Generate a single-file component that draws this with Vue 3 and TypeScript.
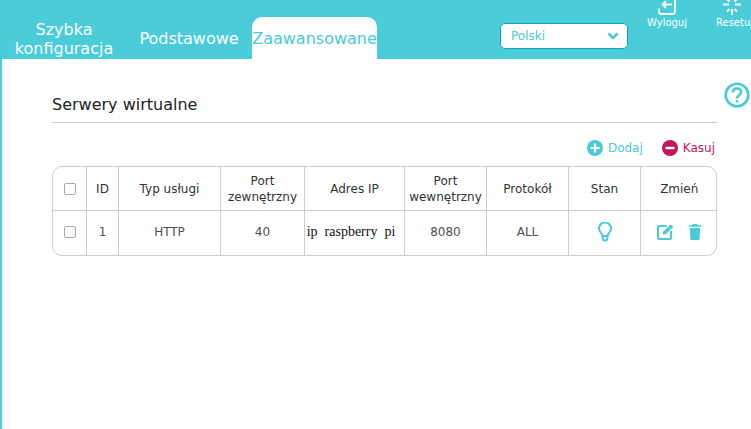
<script setup lang="ts">
interface Col { label: string[]; width: number }
const cols: Col[] = [
  { label: ['ID'], width: 32 },
  { label: ['Typ usługi'], width: 102 },
  { label: ['Port', 'zewnętrzny'], width: 84 },
  { label: ['Adres IP'], width: 100 },
  { label: ['Port', 'wewnętrzny'], width: 82 },
  { label: ['Protokół'], width: 82 },
  { label: ['Stan'], width: 72 },
  { label: ['Zmień'], width: 77 },
]
</script>

<template>
  <div class="page">
    <header class="top">
      <nav class="tabs">
        <a class="tab quick">Szybka<br />konfiguracja</a>
        <a class="tab basic">Podstawowe</a>
        <a class="tab active">Zaawansowane</a>
      </nav>
      <div class="lang">
        <span>Polski</span>
        <svg width="12" height="8" viewBox="0 0 12 8"><path d="M1.500 1.500 6 6l4.500-4.500" fill="none" stroke="#4acbd6" stroke-width="2.600" /></svg>
      </div>
      <div class="act logout">
        <svg width="18" height="15" viewBox="0 0 18 15" fill="none" stroke="#fff" stroke-width="1.800">
          <path d="M1 8.500v3q0 2.500 2.500 2.500h11q2.500 0 2.500-2.500V0" />
          <path d="M14 4.500H5M8 1 4.500 4.500 8 8" />
        </svg>
        <span>Wyloguj</span>
      </div>
      <div class="act reset">
        <svg width="26" height="15" viewBox="0 0 26 15" fill="none" stroke="#fff" stroke-width="2">
          <path d="M10 9v6M1 4.500h6M13 4.500h6M5 11.500 7.500 9M12.500 9 15 11.500M5 -1l2.500 2.500M15 -1l-2.500 2.500" />
        </svg>
        <span>Resetuj</span>
      </div>
    </header>

    <main class="content">
      <h1 class="title">Serwery wirtualne</h1>
      <div class="help">
        <svg width="26" height="26" viewBox="0 0 26 26" fill="none" stroke="#4acbd6" stroke-width="2.600">
          <circle cx="13" cy="13" r="11.300" />
          <path d="M9 10.500q0-4 4-4t4 3.600q0 2-2 3.200t-2 3.200" />
          <path d="M13 18v2.500" />
        </svg>
      </div>
      <div class="tools">
        <span class="tool add">
          <svg width="16" height="16" viewBox="0 0 16 16"><circle cx="8" cy="8" r="8" fill="#4acbd6" /><path d="M8 3.500v9M3.500 8h9" stroke="#fff" stroke-width="2.200" /></svg>
          Dodaj
        </span>
        <span class="tool del">
          <svg width="16" height="16" viewBox="0 0 16 16"><circle cx="8" cy="8" r="8" fill="#c2185b" /><path d="M3.500 8h9" stroke="#fff" stroke-width="2.400" /></svg>
          Kasuj
        </span>
      </div>
      <div class="grid-wrap">
        <table class="grid">
          <colgroup>
            <col style="width: 33px" />
            <col v-for="c in cols" :key="c.label.join()" :style="{ width: c.width + 'px' }" />
          </colgroup>
          <thead>
            <tr>
              <th><span class="check"></span></th>
              <th v-for="c in cols" :key="c.label.join()">
                <template v-for="(l, i) in c.label" :key="l"><br v-if="i" />{{ l }}</template>
              </th>
            </tr>
          </thead>
          <tbody>
            <tr>
              <td><span class="check"></span></td>
              <td>1</td>
              <td>HTTP</td>
              <td>40</td>
              <td class="ip">ip&nbsp; raspberry&nbsp; pi</td>
              <td>8080</td>
              <td>ALL</td>
              <td>
                <svg class="bulb" width="14" height="20" viewBox="0 0 14 20" fill="none" stroke="#4acbd6" stroke-width="2">
                  <path d="M4.500 14c0-2.500-3.500-3.500-3.500-7.500a6 6 0 0 1 12 0c0 4-3.500 5-3.500 7.500z" />
                  <path d="M4.700 14v2.500q0 2 2 2h.6q2 0 2-2V14" />
                </svg>
              </td>
              <td>
                <span class="edits">
                  <svg width="17" height="16" viewBox="0 0 17 16" fill="none">
                    <path d="M9.500 2H2.500Q1 2 1 3.500v10Q1 15 2.500 15h10q1.500 0 1.500-1.500V7" stroke="#4acbd6" stroke-width="2" />
                    <path d="M6 7.700 13.500 0.500 16.500 2.500 8.500 10.500H6z" fill="#4acbd6" />
                  </svg>
                  <svg width="12" height="16" viewBox="0 0 12 16">
                    <path d="M4 0h4L9 1.200h3v1.500H0V1.200h3zM.8 4h10.400l-.5 10.500q-.1 1.500-1.600 1.500H2.900q-1.500 0-1.600-1.500z" fill="#4acbd6" />
                  </svg>
                </span>
              </td>
            </tr>
          </tbody>
        </table>
      </div>
    </main>
  </div>
</template>

<style scoped>
.page {
  width: 751px;
  height: 429px;
  overflow: hidden;
  background: #fff;
  font-family: "DejaVu Sans", sans-serif;
  position: relative;
}
.top {
  height: 59px;
  background: #4acdd9;
  display: flex;
  align-items: flex-start;
  overflow: hidden;
}
.tabs {
  display: flex;
  flex: none;
  align-items: stretch;
  margin-top: 17px;
  color: #fff;
  font-size: 16px;
  height: 42px;
}
.tab {
  display: block;
  text-align: center;
  white-space: nowrap;
}
.quick {
  width: 128px;
  line-height: 19px;
  padding-top: 3px;
  box-sizing: border-box;
}
.basic {
  width: 124px;
  padding-top: 13px;
  padding-right: 2px;
  box-sizing: border-box;
  line-height: 18px;
}
.active {
  width: 125px;
  background: #fff;
  color: #4acbd6;
  border-radius: 10px 10px 0 0;
  padding-top: 13px;
  line-height: 18px;
}
.lang {
  flex: none;
  width: 128px;
  height: 26px;
  box-sizing: border-box;
  margin: 23px 0 0 123px;
  background: #fff;
  border: 1px solid #0ea5b0;
  border-radius: 5px;
  display: flex;
  align-items: center;
  justify-content: space-between;
  padding: 0 8px 0 10px;
  font-size: 12px;
  color: #4acbd6;
}
.act {
  display: flex;
  flex-direction: column;
  align-items: center;
  color: #fff;
  font-size: 10px;
  line-height: 12px;
  flex: none;
}
.act svg { display: block; margin-bottom: 2px; }
.logout { width: 50px; margin-left: 14px; }
.reset { margin-left: 24px; }
.content {
  position: relative;
  height: 370px;
  box-sizing: border-box;
  border-left: 2px solid #4acdd9;
  padding: 0 34px 0 50px;
}
.title {
  margin: 0;
  padding-top: 37px;
  height: 64px;
  box-sizing: border-box;
  border-bottom: 1px solid #ccc;
  font-size: 16px;
  line-height: 18px;
  font-weight: 400;
  color: #222;
}
.help {
  position: absolute;
  right: 1px;
  top: 23px;
  height: 26px;
}
.tools {
  display: flex;
  justify-content: flex-end;
  gap: 19px;
  margin-top: 17px;
  height: 16px;
  padding-right: 2px;
  font-size: 12px;
  line-height: 16px;
}
.tool {
  display: flex;
  align-items: center;
  gap: 5px;
}
.add { color: #4acbd6; }
.del { color: #c2185b; }
.grid-wrap {
  margin-top: 10px;
  width: 665px;
  box-sizing: border-box;
  border: 1px solid #ccc;
  border-radius: 10px;
  overflow: hidden;
}
.grid {
  border-collapse: collapse;
  table-layout: fixed;
  width: 663px;
  font-size: 12px;
  line-height: 16px;
  color: #333;
}
.grid th,
.grid td {
  border-right: 1px solid #ccc;
  text-align: center;
  padding: 0 0 0 1px;
  font-weight: 400;
}
.grid th:last-child,
.grid td:last-child { border-right: 0; }
.grid th {
  height: 43px;
  border-bottom: 1px solid #ccc;
}
.grid td {
  height: 44px;
  box-sizing: border-box;
  padding-bottom: 2px;
  color: #4f4f4f;
}
.check {
  display: inline-block;
  width: 10px;
  height: 10px;
  border: 1px solid #aaa;
  border-radius: 2px;
  vertical-align: middle;
}
.grid .ip {
  font-family: "Liberation Serif", serif;
  font-size: 14px;
  color: #111;
  white-space: nowrap;
  padding-left: 0;
  padding-right: 6px;
}
.bulb { display: inline-block; vertical-align: middle; }
.edits {
  display: inline-flex;
  align-items: center;
  gap: 15px;
  vertical-align: middle;
}
</style>
